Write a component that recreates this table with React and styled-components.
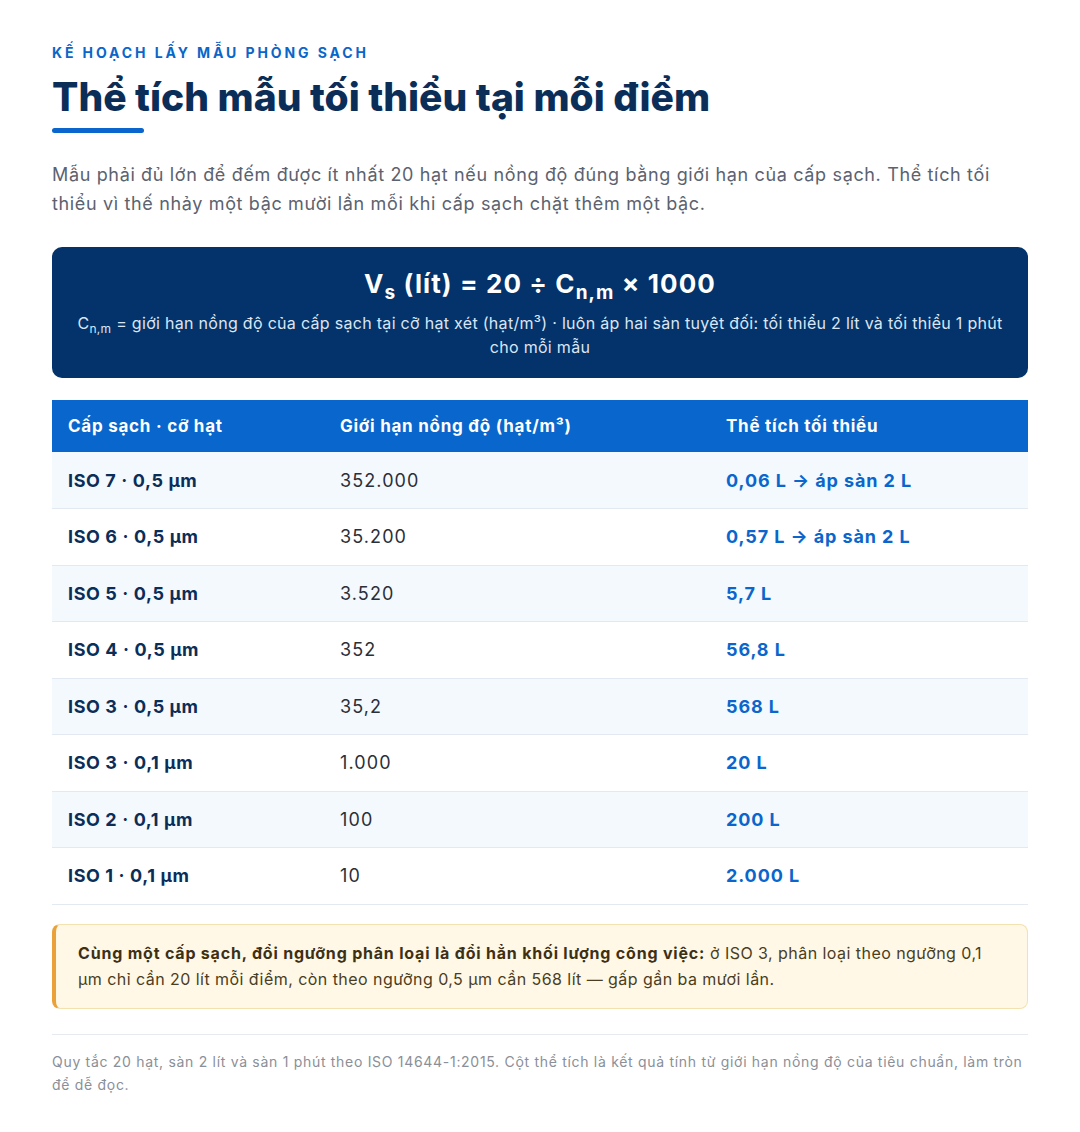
import React from "react";
import styled, { createGlobalStyle } from "styled-components";

const Global = createGlobalStyle`
  html, body { margin: 0; padding: 0; background: #ffffff; }
  body { font-family: Inter, "Noto Sans", "DejaVu Sans", sans-serif; color: #1f2937; -webkit-font-smoothing: antialiased; }
  * { box-sizing: border-box; }
`;

const Page = styled.main`
  width: 1080px;
  padding: 44px 52px 40px;
`;

const Eyebrow = styled.div`
  font-size: 14px;
  font-weight: 700;
  letter-spacing: 2.9px;
  color: #0a66c8;
  text-transform: uppercase;
  line-height: 18px;
`;

const Title = styled.h1`
  margin: 10px 0 0;
  font-size: 39px;
  font-weight: 800;
  color: #0b2e59;
  letter-spacing: 0;
  line-height: 50px;
`;

const Bar = styled.div`
  width: 92px;
  height: 5px;
  border-radius: 3px;
  background: #0a66cc;
  margin-top: 6px;
`;

const Lead = styled.p`
  margin: 27px 0 0;
  font-size: 18px;
  line-height: 29px;
  letter-spacing: 0.65px;
  color: #5b6270;
`;

const Formula = styled.section`
  margin-top: 29px;
  background: #03336a;
  border-radius: 10px;
  padding: 18px 22px 19px;
  text-align: center;
  color: #ffffff;
`;

const FormulaMain = styled.div`
  font-size: 26px;
  font-weight: 700;
  line-height: 38px;
  letter-spacing: 1.1px;
  sub { font-size: 19px; vertical-align: -6px; line-height: 0; }
`;

const FormulaNote = styled.div`
  margin-top: 8px;
  font-size: 16px;
  line-height: 24px;
  letter-spacing: 0.3px;
  color: #dbe6f4;
  sub { font-size: 12px; vertical-align: -4px; line-height: 0; }
`;

const Table = styled.table`
  margin-top: 22px;
  width: 100%;
  border-collapse: collapse;
  table-layout: fixed;
`;

const Th = styled.th`
  background: #0966cc;
  color: #ffffff;
  text-align: left;
  font-size: 17px;
  font-weight: 650;
  letter-spacing: 0.75px;
  height: 52px;
  padding: 0 16px;
  width: ${(p) => p.$w};
`;

const Tr = styled.tr`
  background: ${(p) => (p.$alt ? "#f4f9fe" : "#ffffff")};
  border-bottom: 1px solid #e3e9f1;
`;

const Td = styled.td`
  height: 56.5px;
  padding: 0 16px;
  font-size: 18px;
  letter-spacing: ${(p) => (p.$kind === "num" ? "1.1px" : p.$kind === "vol" ? "0.9px" : "0.6px")};
  font-weight: ${(p) => (p.$kind === "num" ? 400 : 700)};
  color: ${(p) => (p.$kind === "vol" ? "#0a66cc" : p.$kind === "num" ? "#2a2f38" : "#0b2e59")};
`;

const Callout = styled.aside`
  margin-top: 19px;
  background: #fff8e7;
  border: 1px solid #f3e1b0;
  border-left: 4px solid #eaa13a;
  border-radius: 8px;
  padding: 15px 22px 16px;
  font-size: 16px;
  line-height: 26px;
  letter-spacing: 0.45px;
  color: #4a3d22;
`;

const Strong = styled.strong`
  font-weight: 700;
  letter-spacing: 0.8px;
  color: #3d3014;
`;

const Footer = styled.footer`
  margin-top: 25px;
  border-top: 1px solid #e6e9ee;
  padding-top: 15px;
  font-size: 14px;
  line-height: 23px;
  letter-spacing: 0.7px;
  color: #8a8f98;
`;

const rows = [
  ["ISO 7 · 0,5 µm", "352.000", "0,06 L → áp sàn 2 L"],
  ["ISO 6 · 0,5 µm", "35.200", "0,57 L → áp sàn 2 L"],
  ["ISO 5 · 0,5 µm", "3.520", "5,7 L"],
  ["ISO 4 · 0,5 µm", "352", "56,8 L"],
  ["ISO 3 · 0,5 µm", "35,2", "568 L"],
  ["ISO 3 · 0,1 µm", "1.000", "20 L"],
  ["ISO 2 · 0,1 µm", "100", "200 L"],
  ["ISO 1 · 0,1 µm", "10", "2.000 L"],
];

export default function App() {
  return (
    <Page>
      <Global />
      <Eyebrow>Kế hoạch lấy mẫu phòng sạch</Eyebrow>
      <Title>Thể tích mẫu tối thiểu tại mỗi điểm</Title>
      <Bar />
      <Lead>
        Mẫu phải đủ lớn để đếm được ít nhất 20 hạt nếu nồng độ đúng bằng giới hạn của cấp sạch. Thể tích tối
        thiểu vì thế nhảy một bậc mười lần mỗi khi cấp sạch chặt thêm một bậc.
      </Lead>
      <Formula>
        <FormulaMain>
          V<sub>s</sub> (lít) = 20 ÷ C<sub>n,m</sub> × 1000
        </FormulaMain>
        <FormulaNote>
          C<sub>n,m</sub> = giới hạn nồng độ của cấp sạch tại cỡ hạt xét (hạt/m³) · luôn áp hai sàn tuyệt đối: tối thiểu 2 lít và tối thiểu 1 phút
          cho mỗi mẫu
        </FormulaNote>
      </Formula>
      <Table>
        <thead>
          <tr>
            <Th $w="272px">Cấp sạch · cỡ hạt</Th>
            <Th $w="386px">Giới hạn nồng độ (hạt/m³)</Th>
            <Th $w="318px">Thể tích tối thiểu</Th>
          </tr>
        </thead>
        <tbody>
          {rows.map((r, i) => (
            <Tr key={i} $alt={i % 2 === 0}>
              <Td $kind="cls">{r[0]}</Td>
              <Td $kind="num">{r[1]}</Td>
              <Td $kind="vol">{r[2]}</Td>
            </Tr>
          ))}
        </tbody>
      </Table>
      <Callout>
        <Strong>Cùng một cấp sạch, đổi ngưỡng phân loại là đổi hẳn khối lượng công việc:</Strong> ở ISO 3, phân loại theo ngưỡng 0,1
        µm chỉ cần 20 lít mỗi điểm, còn theo ngưỡng 0,5 µm cần 568 lít — gấp gần ba mươi lần.
      </Callout>
      <Footer>
        Quy tắc 20 hạt, sàn 2 lít và sàn 1 phút theo ISO 14644-1:2015. Cột thể tích là kết quả tính từ giới hạn nồng độ của tiêu chuẩn, làm tròn
        để dễ đọc.
      </Footer>
    </Page>
  );
}
